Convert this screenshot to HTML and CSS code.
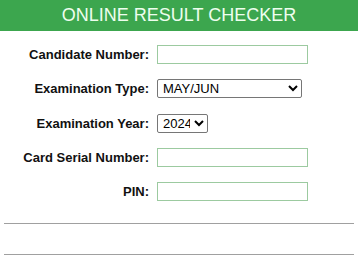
FILE: index.html
```html
<!DOCTYPE html>
<html lang="en">
<head>
  <meta charset="UTF-8" />
  <meta name="viewport" content="width=device-width, initial-scale=1.0"/>
  <title>Online Result Checker</title>
  <link rel="stylesheet" href="styles.css">
</head>
<body>
  <!-- header bar -->
  <div class="header">ONLINE RESULT CHECKER</div>

  <!-- result check form -->
  <form class="checker">
    <label class="label" for="candidate">Candidate Number:</label>
    <input class="field" type="text" id="candidate">

    <label class="label" for="examType">Examination Type:</label>
    <select class="choice type" id="examType">
      <option>MAY/JUN</option>
      <option>NOV/DEC</option>
    </select>

    <label class="label" for="examYear">Examination Year:</label>
    <select class="choice year" id="examYear">
      <option>2024</option>
      <option>2023</option>
    </select>

    <label class="label" for="serial">Card Serial Number:</label>
    <input class="field" type="text" id="serial">

    <label class="label" for="pin">PIN:</label>
    <input class="field" type="text" id="pin">
  </form>

  <hr class="rule first">
  <hr class="rule">
</body>
</html>
```

FILE: styles.css
```css
* {
  box-sizing: border-box;
}
body {
  margin: 0;
  font-family: "Liberation Sans", Arial, sans-serif;
  background-color: #fff;
  color: #111;
}
/* header bar */
.header {
  height: 31px;
  line-height: 31px;
  background-color: #3ca64e;
  color: #eefeee;
  text-align: center;
  font-size: 18px;
}
/* form grid: labels right, fields left */
.checker {
  display: grid;
  grid-template-columns: 149px auto;
  grid-auto-rows: 19px;
  column-gap: 8px;
  row-gap: 15.3px;
  align-items: center;
  justify-items: start;
  margin: 14px 0 0 0;
}
.label {
  justify-self: end;
  font-weight: bold;
  font-size: 13px;
}
.field {
  width: 151px;
  height: 19px;
  border: 1px solid #9ccaa0;
  padding: 1px 2px;
  font-size: 13px;
}
.choice {
  height: 19px;
  border: 1px solid #767676;
  border-radius: 2px;
  font-family: "Liberation Sans", Arial, sans-serif;
  font-size: 13px;
  color: #000;
  background: #fff;
  padding: 0 1px;
}
.choice.type {
  width: 145px;
}
.choice.year {
  width: 51px;
}
.rule {
  margin: 30px 4px 0 4px;
  border: none;
  border-top: 1px solid #a0a0a0;
}
.rule.first {
  margin-top: 22px;
}
```
